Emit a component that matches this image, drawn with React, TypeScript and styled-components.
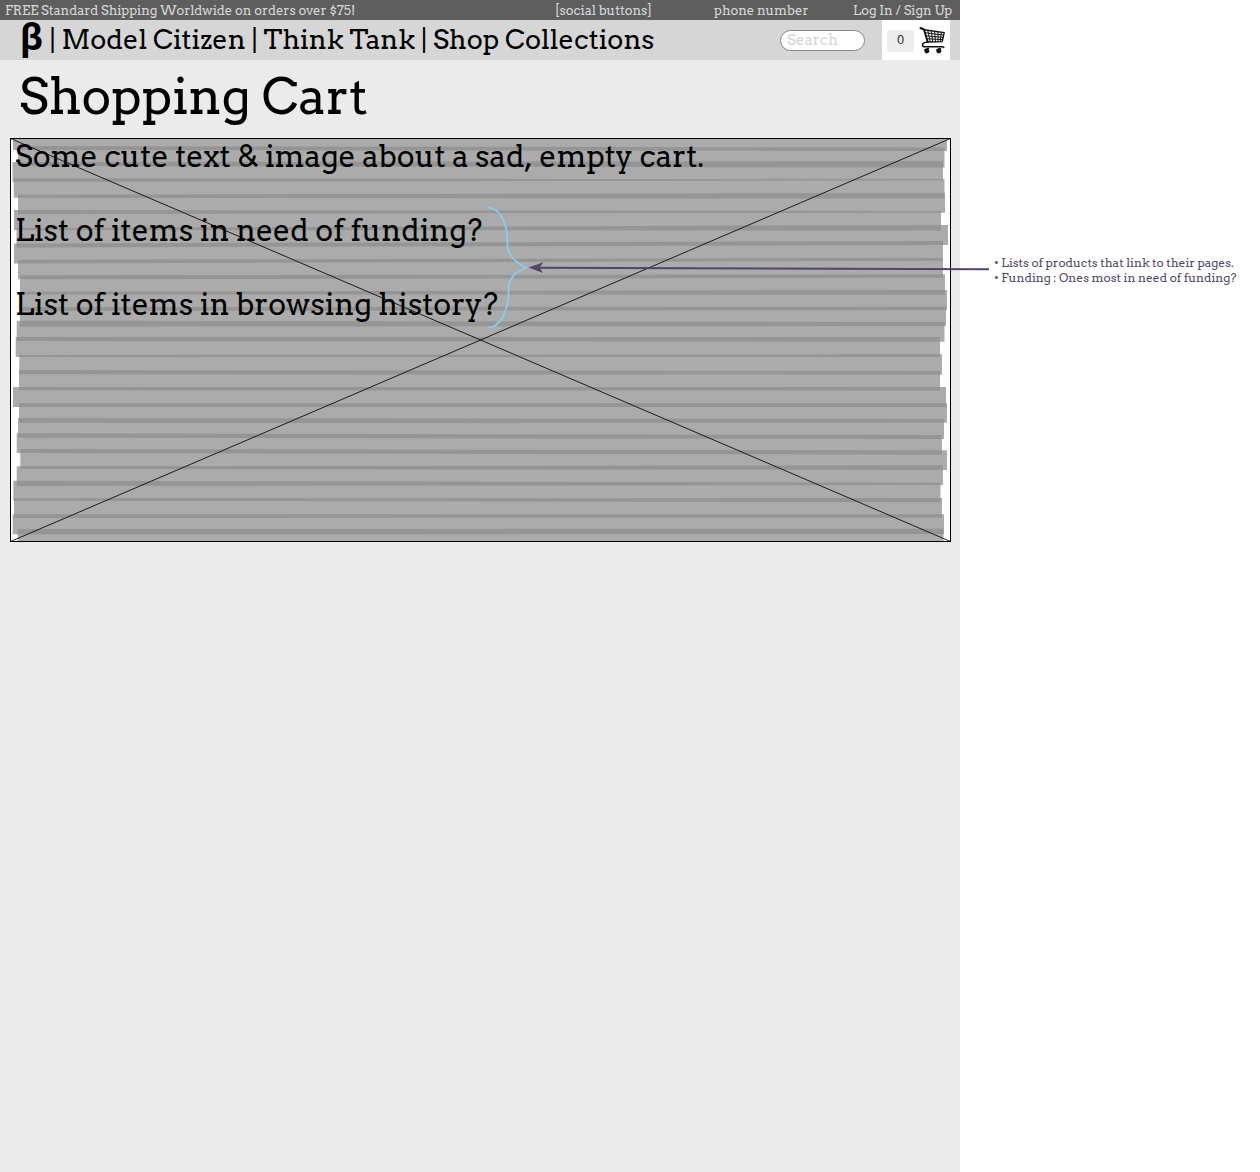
import React from 'react';
import styled, { createGlobalStyle } from 'styled-components';

const Global = createGlobalStyle`
  * { box-sizing: border-box; }
  body { margin: 0; background: #fff; font-family: Arvo, "DejaVu Serif Condensed", serif; color: #000; }
  p, h1, ul { margin: 0; padding: 0; font-weight: 400; }
`;

const Board = styled.div`
  position: relative;
  display: flex;
  width: 1260px;
  height: 1172px;
  overflow: hidden;
`;

const Page = styled.main`
  display: flex;
  flex-direction: column;
  width: 960px;
  height: 100%;
  background: #ebebeb;
`;

const TopBar = styled.div`
  display: flex;
  height: 20px;
  padding: 1px 7px 0 5px;
  background: #5e5e5e;
  color: #d6d6d6;
  font-size: 13px;
  line-height: 20px;
  letter-spacing: -0.05px;
  white-space: nowrap;
`;

const TopItem = styled.span<{ $width?: number }>`
  flex: ${(p) => (p.$width ? `0 0 ${p.$width}px` : '0 0 auto')};
`;

const Header = styled.header`
  display: flex;
  align-items: center;
  height: 40px;
  padding: 0 10px 0 20px;
  background: #d6d6d6;
`;

const Logo = styled.span`
  width: 29.6px;
  height: 40px;
  font: bold 38px/34px Roboto, sans-serif;
`;

const Nav = styled.nav`
  flex: 1;
  font-size: 27px;
  line-height: 40px;
  letter-spacing: -0.04px;
  white-space: pre;
`;

const Search = styled.input`
  width: 85px;
  height: 21px;
  margin: 0 17px 0 0;
  padding: 0 6px;
  border: 1px solid #858585;
  border-radius: 11px;
  background: #fff;
  font: 15px Arvo, serif;
  &::placeholder { color: #d6d6d6; opacity: 1; }
`;

const CartBox = styled.div`
  display: flex;
  align-items: center;
  gap: 5px;
  width: 68px;
  height: 40px;
  padding: 1px 0 0 5px;
  background: #fff;
`;

const Count = styled.span`
  width: 27px;
  height: 22px;
  border-radius: 3px;
  background: #ededed;
  color: #333;
  font: 12px/21px "DejaVu Sans", sans-serif;
  text-align: center;
`;

const Title = styled.h1`
  height: 78px;
  padding-left: 19px;
  font-size: 50px;
  line-height: 72px;
  letter-spacing: -0.05px;
`;

const Panel = styled.section`
  position: relative;
  width: 941px;
  height: 404px;
  margin-left: 10px;
  background: #fff;
`;

const Scribble = styled.svg`
  position: absolute;
  inset: 0;
`;

const Copy = styled.div`
  position: relative;
  display: flex;
  flex-direction: column;
  gap: 37px;
  padding: 0 5px;
  font-size: 30px;
  line-height: 37px;
  letter-spacing: -0.04px;
`;

const Lead = styled.p`
  font-kerning: none;
`;

const Notes = styled.ul`
  padding: 255px 0 0 34px;
  color: #54476a;
  font-size: 12px;
  line-height: 15px;
  letter-spacing: -0.02px;
  list-style: none;
  white-space: nowrap;
`;

const Connector = styled.svg`
  position: absolute;
  left: 480px;
  top: 200px;
`;

// left x, right x, left top, left bottom, right top, right bottom
const strokes = [
  [13, 947, 138, 150, 138, 151],
  [18, 944.5, 146, 166, 147.5, 167.5],
  [12.5, 943, 162, 181.7, 161, 180.5],
  [13.7, 944.5, 178.3, 197.7, 179, 198.7],
  [18, 945, 194.7, 214, 193, 212.7],
  [14, 941, 210, 230, 211, 230.7],
  [16.5, 948, 228, 247.5, 225, 245],
  [14, 943, 243.5, 263.5, 241, 260.7],
  [18, 943, 259.7, 279.3, 258, 277.7],
  [20, 945, 275.3, 294.5, 274.3, 294.7],
  [20, 947, 291.7, 311, 290, 310],
  [20, 946, 307, 326.7, 306.7, 326],
  [16.7, 944.5, 320.7, 341, 322, 341.7],
  [15.7, 940, 337, 357, 337, 357],
  [19.3, 942, 355, 374.3, 354.3, 374.7],
  [19, 940, 370, 390.3, 371, 390.7],
  [13, 946, 387, 407, 387, 407],
  [19, 947, 403.3, 423, 403, 422.7],
  [18, 944, 418, 437.7, 419, 439],
  [16.7, 942, 433.3, 453, 435, 454.7],
  [20.3, 947, 449, 469, 450.3, 470],
  [16.7, 943, 466.3, 486, 465.3, 485],
  [13.3, 940.5, 480.7, 500.7, 482.7, 502.3],
  [14, 942, 498.3, 518, 498, 517.7],
  [12.7, 944, 514.3, 534.3, 514.3, 534],
  [17.7, 943.5, 529, 541, 528.7, 541],
];

const quad = (l: number, r: number, lt: number, lb: number, rt: number, rb: number) =>
  `${l},${lt} ${r},${rt} ${r},${rb} ${l},${lb}`;

function CartIcon() {
  return (
    <svg width="27" height="28" viewBox="0 0 27 28" fill="none" stroke="#111" strokeLinecap="round" strokeLinejoin="round">
      <path d="M1.4 1 5 2.500 8.600 15" strokeWidth="1.9" />
      <path d="M5 2.700 25.200 5.600 23.200 14.600 8.600 15" strokeWidth="1.4" />
      <path d="M6 5.700 24.600 8.100M6.800 8.700 24 10.400M7.600 11.700 23.500 12.600M8.800 3.500 11.200 14.800M12.200 3.900 13.800 14.800M15.600 4.300 16.500 14.800M19 4.800 19 14.800M22.200 5.200 21.300 14.600" strokeWidth="1" />
      <path d="M8.600 15C5 15.300 3.300 16.500 3.500 18.400 3.600 19.700 5 19.900 6.500 19.800H23.300C24.200 19.800 24.600 20 24.800 20.600" strokeWidth="1.500" />
      <path d="M6 22.800 9.500 21.600M18 22.800 21.500 21.600" strokeWidth="1.600" />
      <circle cx="7.800" cy="24" r="2" fill="#111" strokeWidth="1" />
      <circle cx="19.800" cy="24" r="2" fill="#111" strokeWidth="1" />
    </svg>
  );
}

function ScribbleFill() {
  return (
    <Scribble width="941" height="404" viewBox="10 138 941 404">
      {strokes.map(([l, r, lt, lb, rt, rb], i) => (
        <polygon key={i} points={quad(l, r, lt, lb, rt, rb)} fill="#ababab" />
      ))}
      {strokes.slice(1).map(([l, r, lt, , rt], i) => {
        const prev = strokes[i];
        return (
          <polygon
            key={i}
            points={quad(Math.max(l, prev[0]), Math.min(r, prev[1]), lt, prev[3], rt, prev[5])}
            fill="#959595"
          />
        );
      })}
      <path d="M10.5 138.5 950.5 541.5M10.5 541.5 950.5 138.5" stroke="#1c1c1c" strokeWidth="1" />
      <rect x="10.5" y="138.5" width="940" height="403" fill="none" stroke="#000" />
    </Scribble>
  );
}

export default function App() {
  return (
    <Board>
      <Global />
      <Page>
        <TopBar>
          <TopItem $width={550}>FREE Standard Shipping Worldwide on orders over $75!</TopItem>
          <TopItem $width={159}>[social buttons]</TopItem>
          <TopItem $width={139}>phone number</TopItem>
          <TopItem>Log In / Sign Up</TopItem>
        </TopBar>
        <Header>
          <Logo>β</Logo>
          <Nav>| Model Citizen | Think Tank | Shop Collections</Nav>
          <Search placeholder="Search" aria-label="Search" />
          <CartBox>
            <Count>0</Count>
            <CartIcon />
          </CartBox>
        </Header>
        <Title>Shopping Cart</Title>
        <Panel>
          <ScribbleFill />
          <Copy>
            <Lead>Some cute text &amp; image about a sad, empty cart.</Lead>
            <p>List of items in need of funding?</p>
            <p>List of items in browsing history?</p>
          </Copy>
        </Panel>
      </Page>
      <Notes>
        <li>• Lists of products that link to their pages.</li>
        <li>• Funding : Ones most in need of funding?</li>
      </Notes>
      <Connector width="512" height="140" viewBox="480 200 512 140" fill="none">
        <path
          d="M488 207.5C500 208 507.5 223 507.5 243 507.5 256 516 263 526 267.5 516 272 509 277 508.5 289 509 311 500 327.500 488 327.500"
          stroke="#86cdef"
          strokeWidth="1.7"
        />
        <path d="M538 267.700 989 269.300" stroke="#54436b" strokeWidth="2" />
        <path d="M528.500 267.500 543.500 262.300 539.500 267.600 543 273Z" fill="#54436b" />
      </Connector>
    </Board>
  );
}
